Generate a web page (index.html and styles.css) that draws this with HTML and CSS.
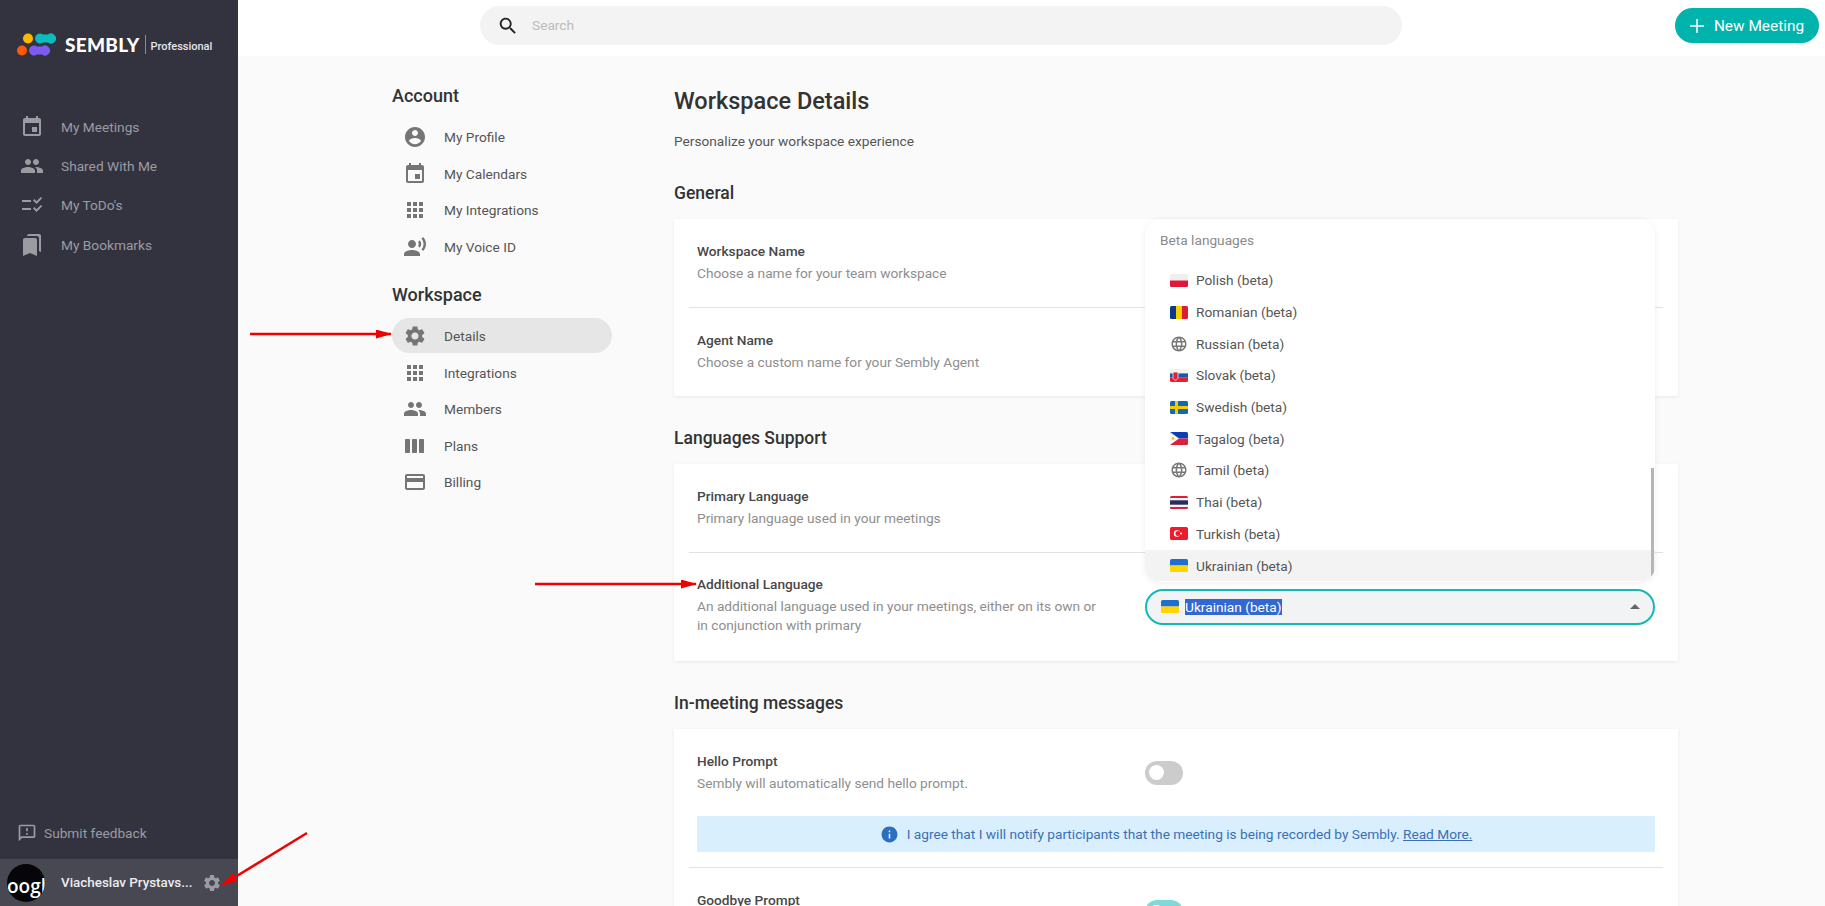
FILE: index.html
```html
<!DOCTYPE html>
<html lang="en">
<head>
    <meta charset="UTF-8">
    <meta name="viewport" content="width=device-width, initial-scale=1.0">
    <title>Sembly - Workspace Details</title>
    <link rel="stylesheet" href="styles.css">
</head>
<body>
    <svg class="icon-defs" width="0" height="0">
        <symbol id="i-event" viewBox="0 0 24 24"><path d="M17 12h-5v5h5v-5zM16 1v2H8V1H6v2H5c-1.11 0-1.99.9-1.99 2L3 19c0 1.1.89 2 2 2h14c1.1 0 2-.9 2-2V5c0-1.1-.9-2-2-2h-1V1h-2zm3 18H5V8h14v11z"/></symbol>
        <symbol id="i-people" viewBox="0 0 24 24"><path d="M16 11c1.66 0 2.99-1.34 2.99-3S17.66 5 16 5c-1.66 0-3 1.34-3 3s1.34 3 3 3zm-8 0c1.66 0 2.99-1.34 2.99-3S9.66 5 8 5C6.34 5 5 6.34 5 8s1.34 3 3 3zm0 2c-2.33 0-7 1.17-7 3.5V19h14v-2.5c0-2.33-4.67-3.5-7-3.5zm8 0c-.29 0-.62.02-.97.05 1.16.84 1.97 1.97 1.97 3.45V19h6v-2.5c0-2.33-4.67-3.5-7-3.5z"/></symbol>
        <symbol id="i-todo" viewBox="0 0 24 24"><path d="M16.54 11L13 7.46l1.41-1.41 2.12 2.12 4.24-4.24 1.41 1.41zM16.54 19L13 15.46l1.41-1.41 2.12 2.12 4.24-4.24 1.41 1.41zM11 7H2v2h9zM11 15H2v2h9z"/></symbol>
        <symbol id="i-bookmarks" viewBox="0 0 24 24"><path d="M19 18l2 1V3c0-1.1-.9-2-2-2H8.99C7.89 1 7 1.9 7 3h10c1.1 0 2 .9 2 2v13zM15 5H5c-1.1 0-2 .9-2 2v16l7-3 7 3V7c0-1.1-.9-2-2-2z"/></symbol>
        <symbol id="i-account" viewBox="0 0 24 24"><path d="M12 2C6.48 2 2 6.48 2 12s4.48 10 10 10 10-4.48 10-10S17.52 2 12 2zm0 3c1.66 0 3 1.34 3 3s-1.34 3-3 3-3-1.34-3-3 1.34-3 3-3zm0 14.2c-2.5 0-4.71-1.28-6-3.22.03-1.99 4-3.08 6-3.08 1.99 0 5.97 1.09 6 3.08-1.29 1.94-3.5 3.22-6 3.22z"/></symbol>
        <symbol id="i-apps" viewBox="0 0 24 24"><path d="M4 8h4V4H4v4zm6 12h4v-4h-4v4zm-6 0h4v-4H4v4zm0-6h4v-4H4v4zm6 0h4v-4h-4v4zm6-10v4h4V4h-4zm-6 4h4V4h-4v4zm6 6h4v-4h-4v4zm0 6h4v-4h-4v4z"/></symbol>
        <symbol id="i-voice" viewBox="0 0 24 24"><path d="M9 13c2.21 0 4-1.79 4-4s-1.79-4-4-4-4 1.79-4 4 1.79 4 4 4zm0 2c-2.67 0-8 1.34-8 4v2h16v-2c0-2.66-5.33-4-8-4zm7.76-9.64l-1.68 1.69c.84 1.18.84 2.71 0 3.89l1.68 1.69c2.02-2.02 2.02-5.07 0-7.27zM20.07 2l-1.63 1.63c2.77 3.02 2.77 7.56 0 10.74L20.07 16c3.9-3.89 3.91-9.95 0-14z"/></symbol>
        <symbol id="i-gear" viewBox="0 0 24 24"><path d="M19.14 12.94c.04-.3.06-.61.06-.94 0-.32-.02-.64-.07-.94l2.03-1.58c.18-.14.23-.41.12-.61l-1.92-3.32c-.12-.22-.37-.29-.59-.22l-2.39.96c-.5-.38-1.03-.7-1.62-.94l-.36-2.54c-.04-.24-.24-.41-.48-.41h-3.84c-.24 0-.43.17-.47.41l-.36 2.54c-.59.24-1.13.57-1.62.94l-2.39-.96c-.22-.08-.47 0-.59.22L2.74 8.87c-.12.21-.08.47.12.61l2.03 1.58c-.05.3-.09.63-.09.94s.02.64.07.94l-2.03 1.58c-.18.14-.23.41-.12.61l1.92 3.32c.12.22.37.29.59.22l2.39-.96c.5.38 1.03.7 1.62.94l.36 2.54c.05.24.24.41.48.41h3.84c.24 0 .44-.17.47-.41l.36-2.54c.59-.24 1.13-.56 1.62-.94l2.39.96c.22.08.47 0 .59-.22l1.92-3.32c.12-.22.07-.47-.12-.61l-2.01-1.58zM12 15.6c-1.98 0-3.6-1.62-3.6-3.6s1.62-3.6 3.6-3.6 3.6 1.62 3.6 3.6-1.62 3.6-3.6 3.6z"/></symbol>
        <symbol id="i-week" viewBox="0 0 24 24"><path d="M6 5H3c-.55 0-1 .45-1 1v12c0 .55.45 1 1 1h3c.55 0 1-.45 1-1V6c0-.55-.45-1-1-1zm14 0h-3c-.55 0-1 .45-1 1v12c0 .55.45 1 1 1h3c.55 0 1-.45 1-1V6c0-.55-.45-1-1-1zm-7 0h-3c-.55 0-1 .45-1 1v12c0 .55.45 1 1 1h3c.55 0 1-.45 1-1V6c0-.55-.45-1-1-1z"/></symbol>
        <symbol id="i-card" viewBox="0 0 24 24"><path d="M20 4H4c-1.11 0-1.99.89-1.99 2L2 18c0 1.11.89 2 2 2h16c1.11 0 2-.89 2-2V6c0-1.11-.89-2-2-2zm0 14H4v-6h16v6zm0-10H4V6h16v2z"/></symbol>
        <symbol id="i-feedback" viewBox="0 0 24 24"><path d="M20 2H4c-1.1 0-1.99.9-1.99 2L2 22l4-4h14c1.1 0 2-.9 2-2V4c0-1.1-.9-2-2-2zm0 14H5.17L4 17.17V4h16v12zM11 12h2v2h-2zM11 6h2v4h-2z"/></symbol>
        <symbol id="i-globe" viewBox="0 0 24 24"><path d="M11.99 2C6.47 2 2 6.48 2 12s4.47 10 9.99 10C17.52 22 22 17.52 22 12S17.52 2 11.99 2zm6.93 6h-2.95c-.32-1.25-.78-2.45-1.38-3.56 1.84.63 3.37 1.91 4.33 3.56zM12 4.04c.83 1.2 1.48 2.53 1.91 3.96h-3.82c.43-1.43 1.08-2.76 1.91-3.96zM4.26 14C4.1 13.36 4 12.69 4 12s.1-1.36.26-2h3.38c-.08.66-.14 1.32-.14 2 0 .68.06 1.34.14 2H4.26zm.82 2h2.95c.32 1.25.78 2.45 1.38 3.56-1.84-.63-3.37-1.9-4.33-3.56zm2.95-8H5.08c.96-1.66 2.49-2.93 4.33-3.56C8.81 5.55 8.35 6.75 8.03 8zM12 19.96c-.83-1.2-1.48-2.53-1.91-3.96h3.82c-.43 1.43-1.08 2.76-1.91 3.96zM14.34 14H9.66c-.09-.66-.16-1.32-.16-2 0-.68.07-1.35.16-2h4.68c.09.65.16 1.32.16 2 0 .68-.07 1.34-.16 2zm.25 5.56c.6-1.11 1.06-2.31 1.38-3.56h2.95c-.96 1.65-2.49 2.93-4.33 3.56zM16.36 14c.08-.66.14-1.32.14-2 0-.68-.06-1.34-.14-2h3.38c.16.64.26 1.31.26 2s-.1 1.36-.26 2h-3.38z"/></symbol>
        <symbol id="f-ua" viewBox="0 0 18 13"><rect width="18" height="6.5" fill="#1f6fd0"/><rect y="6.5" width="18" height="6.5" fill="#ffd500"/></symbol>
    </svg>

    <aside class="sidebar">
        <div class="logo">
            <svg class="logo-mark" width="40" height="24" viewBox="0 0 40 24">
                <circle cx="11" cy="5.5" r="5" fill="#fdb900"/>
                <circle cx="5" cy="17.5" r="5" fill="#ff5a0a"/>
                <path d="M18 5.5a5 5 0 0 1 8-4h5a5 5 0 1 1 0 8h-5a5 5 0 0 1-8-4z" fill="#0cbcbc"/>
                <path d="M12 17.5a5 5 0 0 1 8-4h5a5 5 0 1 1 0 8h-5a5 5 0 0 1-8-4z" fill="#7a5cf0"/>
            </svg>
            <span class="logo-name">SEMBLY</span>
            <span class="logo-plan">Professional</span>
        </div>
        <nav class="side-nav">
            <a class="side-link"><svg class="icon"><use href="#i-event"/></svg>My Meetings</a>
            <a class="side-link"><svg class="icon"><use href="#i-people"/></svg>Shared With Me</a>
            <a class="side-link"><svg class="icon"><use href="#i-todo"/></svg>My ToDo's</a>
            <a class="side-link"><svg class="icon"><use href="#i-bookmarks"/></svg>My Bookmarks</a>
        </nav>
        <a class="feedback"><svg class="icon-small"><use href="#i-feedback"/></svg>Submit feedback</a>
        <div class="user">
            <div class="avatar">oogl</div>
            <span class="user-name">Viacheslav Prystavs...</span>
            <svg class="icon-small"><use href="#i-gear"/></svg>
        </div>
    </aside>

    <div class="page">
        <header class="topbar">
            <div class="search">
                <svg class="search-icon" viewBox="0 0 24 24"><path d="M15.5 14h-.79l-.28-.27C15.41 12.59 16 11.11 16 9.5 16 5.91 13.09 3 9.5 3S3 5.91 3 9.5 5.91 16 9.5 16c1.61 0 3.09-.59 4.23-1.57l.27.28v.79l5 4.99L20.49 19l-4.99-5zm-6 0C7.01 14 5 11.99 5 9.5S7.01 5 9.5 5 14 7.01 14 9.5 11.99 14 9.5 14z"/></svg>
                <span class="search-text">Search</span>
            </div>
            <button class="new-meeting">
                <svg width="14" height="14" viewBox="0 0 14 14"><path d="M7 0v14M0 7h14" stroke="#fff" stroke-width="1.5"/></svg>
                New Meeting
            </button>
        </header>

        <div class="content">
            <nav class="settings-nav">
                <h3>Account</h3>
                <ul>
                    <li><svg class="icon"><use href="#i-account"/></svg>My Profile</li>
                    <li><svg class="icon"><use href="#i-event"/></svg>My Calendars</li>
                    <li><svg class="icon"><use href="#i-apps"/></svg>My Integrations</li>
                    <li><svg class="icon"><use href="#i-voice"/></svg>My Voice ID</li>
                </ul>
                <h3 class="second">Workspace</h3>
                <ul>
                    <li class="active"><svg class="icon"><use href="#i-gear"/></svg>Details</li>
                    <li><svg class="icon"><use href="#i-apps"/></svg>Integrations</li>
                    <li><svg class="icon"><use href="#i-people"/></svg>Members</li>
                    <li><svg class="icon"><use href="#i-week"/></svg>Plans</li>
                    <li><svg class="icon"><use href="#i-card"/></svg>Billing</li>
                </ul>
            </nav>

            <main class="details">
                <h1>Workspace Details</h1>
                <p class="lead">Personalize your workspace experience</p>

                <h2>General</h2>
                <section class="card">
                    <div class="row">
                        <div class="row-text">
                            <div class="row-title">Workspace Name</div>
                            <div class="row-sub">Choose a name for your team workspace</div>
                        </div>
                    </div>
                    <div class="row">
                        <div class="row-text">
                            <div class="row-title">Agent Name</div>
                            <div class="row-sub">Choose a custom name for your Sembly Agent</div>
                        </div>
                    </div>
                </section>

                <h2>Languages Support</h2>
                <section class="card card-languages">
                    <div class="row">
                        <div class="row-text">
                            <div class="row-title">Primary Language</div>
                            <div class="row-sub">Primary language used in your meetings</div>
                        </div>
                    </div>
                    <div class="row row-select">
                        <div class="row-text">
                            <div class="row-title">Additional Language</div>
                            <div class="row-sub">An additional language used in your meetings, either on its own or in conjunction with primary</div>
                        </div>
                        <div class="select">
                            <svg class="flag"><use href="#f-ua"/></svg>
                            <span class="selected-text">Ukrainian (beta)</span>
                            <span class="caret"></span>

                            <div class="menu">
                                <div class="menu-label">Beta languages</div>
                                <div class="menu-item">
                                    <svg class="flag" viewBox="0 0 18 13"><rect width="18" height="6.5" fill="#efefef"/><rect y="6.5" width="18" height="6.5" fill="#e0173d"/></svg>Polish (beta)
                                </div>
                                <div class="menu-item">
                                    <svg class="flag" viewBox="0 0 18 13"><rect width="6" height="13" fill="#0a3a8c"/><rect x="6" width="6" height="13" fill="#fdd000"/><rect x="12" width="6" height="13" fill="#d81e34"/></svg>Romanian (beta)
                                </div>
                                <div class="menu-item"><svg class="flag globe"><use href="#i-globe"/></svg>Russian (beta)</div>
                                <div class="menu-item">
                                    <svg class="flag" viewBox="0 0 18 13"><rect width="18" height="4.4" fill="#f2f2f2"/><rect y="4.4" width="18" height="4.3" fill="#1557b0"/><rect y="8.7" width="18" height="4.3" fill="#e6202f"/><path d="M3 3h5v5.5c0 1.5-1.3 2.3-2.5 2.800C4.300 10.800 3 10 3 8.500z" fill="#e6202f" stroke="#fff" stroke-width=".7"/></svg>Slovak (beta)
                                </div>
                                <div class="menu-item">
                                    <svg class="flag" viewBox="0 0 18 13"><rect width="18" height="13" fill="#0b6cb0"/><rect x="5" width="3" height="13" fill="#fdc800"/><rect y="5" width="18" height="3" fill="#fdc800"/></svg>Swedish (beta)
                                </div>
                                <div class="menu-item">
                                    <svg class="flag" viewBox="0 0 18 13"><rect width="18" height="6.5" fill="#0c3fb5"/><rect y="6.5" width="18" height="6.5" fill="#dc1f3c"/><path d="M0 0l9 6.5L0 13z" fill="#f5f5f5"/><circle cx="3" cy="6.5" r="1.4" fill="#fcc41a"/></svg>Tagalog (beta)
                                </div>
                                <div class="menu-item"><svg class="flag globe"><use href="#i-globe"/></svg>Tamil (beta)</div>
                                <div class="menu-item">
                                    <svg class="flag" viewBox="0 0 18 13"><rect width="18" height="13" fill="#d8203a"/><rect y="2" width="18" height="9" fill="#f3f3f3"/><rect y="4.3" width="18" height="4.4" fill="#2a2d60"/></svg>Thai (beta)
                                </div>
                                <div class="menu-item">
                                    <svg class="flag" viewBox="0 0 18 13"><rect width="18" height="13" rx="1" fill="#ec1c2c"/><circle cx="7" cy="6.5" r="3.2" fill="#fff"/><circle cx="8" cy="6.5" r="2.5" fill="#ec1c2c"/><circle cx="11" cy="6.5" r="1" fill="#fff"/></svg>Turkish (beta)
                                </div>
                                <div class="menu-item hover"><svg class="flag"><use href="#f-ua"/></svg>Ukrainian (beta)</div>
                                <div class="scrollbar"></div>
                            </div>
                        </div>
                    </div>
                </section>

                <h2>In-meeting messages</h2>
                <section class="card">
                    <div class="row row-block">
                        <div class="row-main">
                            <div class="row-text">
                                <div class="row-title">Hello Prompt</div>
                                <div class="row-sub">Sembly will automatically send hello prompt.</div>
                            </div>
                            <span class="toggle"></span>
                        </div>
                        <div class="notice">
                            <svg class="notice-icon" viewBox="0 0 24 24"><path d="M12 2C6.48 2 2 6.48 2 12s4.48 10 10 10 10-4.48 10-10S17.52 2 12 2zm1 15h-2v-6h2v6zm0-8h-2V7h2v2z"/></svg>
                            <span>I agree that I will notify participants that the meeting is being recorded by Sembly. <a>Read More.</a></span>
                        </div>
                    </div>
                    <div class="row row-block">
                        <div class="row-main">
                            <div class="row-text">
                                <div class="row-title">Goodbye Prompt</div>
                            </div>
                            <span class="toggle toggle-on"></span>
                        </div>
                    </div>
                </section>
            </main>
        </div>
    </div>

    <!-- red annotation arrows on top of the screenshot -->
    <svg class="arrows" width="1825" height="906" viewBox="0 0 1825 906">
        <defs>
            <marker id="head" markerWidth="16" markerHeight="9" refX="15" refY="4.5" orient="auto" markerUnits="userSpaceOnUse">
                <path d="M0 0L16 4.5L0 9z" fill="#f00000"/>
            </marker>
        </defs>
        <path d="M250 334H391" stroke="#f00000" stroke-width="2.5" marker-end="url(#head)"/>
        <path d="M535 584H696" stroke="#f00000" stroke-width="2.5" marker-end="url(#head)"/>
        <path d="M307 833L222 885" stroke="#f00000" stroke-width="2.5" marker-end="url(#head)"/>
    </svg>
</body>
</html>
```

FILE: styles.css
```css
* {
    margin: 0;
    padding: 0;
    box-sizing: border-box;
}

html, body {
    height: 100%;
    overflow: hidden;
}

body {
    display: flex;
    font-family: Roboto, sans-serif;
    font-size: 13.7px;
    background-color: #fafafa;
    color: #333;
}

.icon-defs {
    position: absolute;
}

.icon {
    width: 24px;
    height: 24px;
    flex: none;
    fill: currentColor;
}

.icon-small {
    width: 20px;
    height: 20px;
    flex: none;
    fill: currentColor;
}

/* sidebar */
.sidebar {
    width: 238px;
    flex: none;
    display: flex;
    flex-direction: column;
    background-color: #33333f;
    color: #9b9ba3;
}

.logo {
    height: 107px;
    padding: 33px 0 0 17px;
    display: flex;
    align-items: flex-start;
}

.logo-mark {
    flex: none;
}

.logo-name {
    margin: 2px 0 0 8px;
    padding-right: 6px;
    border-right: 1px solid #8a8a93;
    font-family: Lato, sans-serif;
    font-size: 19px;
    font-weight: 900;
    line-height: 19px;
    letter-spacing: 0.3px;
    color: #fff;
}

.logo-plan {
    margin: 4px 0 0 4px;
    font-size: 11px;
    font-weight: 500;
    line-height: 19px;
    color: #e6e6ea;
}

.side-link {
    height: 39.3px;
    padding-left: 20px;
    display: flex;
    align-items: center;
    gap: 17px;
}

.feedback {
    margin-top: auto;
    height: 40px;
    margin-bottom: 6px;
    padding-left: 17px;
    display: flex;
    align-items: center;
    gap: 7px;
}

.user {
    height: 47px;
    padding: 0 16px 0 7px;
    display: flex;
    align-items: center;
    background-color: #484852;
}

.avatar {
    width: 38px;
    height: 38px;
    flex: none;
    margin-right: 16px;
    border-radius: 50%;
    overflow: hidden;
    background-color: #060608;
    color: #fff;
    font-family: "Open Sans", sans-serif;
    font-size: 19px;
    font-weight: 600;
    line-height: 44px;
    white-space: nowrap;
}

.user-name {
    flex: 1;
    color: #ececf0;
    font-size: 13.4px;
    font-weight: 500;
    white-space: nowrap;
}

/* top bar */
.page {
    flex: 1;
    min-width: 0;
    display: flex;
    flex-direction: column;
}

.topbar {
    height: 56px;
    flex: none;
    padding: 6px 6px 0 242px;
    display: flex;
    align-items: flex-start;
    justify-content: space-between;
    background-color: #fff;
}

.search {
    width: 922px;
    height: 39px;
    padding-left: 17px;
    display: flex;
    align-items: center;
    gap: 13px;
    border-radius: 20px;
    background-color: #f3f3f3;
    color: #bbb;
}

.search-text {
    padding-bottom: 1px;
}

.search-icon {
    width: 22px;
    height: 22px;
    fill: #222;
}

.new-meeting {
    width: 144px;
    height: 35px;
    margin-top: 2px;
    border: none;
    border-radius: 18px;
    display: flex;
    align-items: center;
    justify-content: center;
    gap: 10px;
    background-color: #00b3ad;
    color: #fff;
    font-family: Roboto, sans-serif;
    font-size: 15.4px;
}

/* settings nav */
.content {
    flex: 1;
    min-height: 0;
    padding-left: 154px;
    display: flex;
    gap: 62px;
}

.settings-nav {
    width: 220px;
    flex: none;
    padding-top: 28px;
}

.settings-nav h3 {
    margin-bottom: 11px;
    font-size: 18px;
    font-weight: 500;
    line-height: 24px;
    color: #333;
}

.settings-nav h3.second {
    margin-top: 18px;
}

.settings-nav ul {
    list-style: none;
}

.settings-nav li {
    height: 36.5px;
    padding-left: 11px;
    display: flex;
    align-items: center;
    gap: 17px;
    border-radius: 18px;
    color: #555;
}

.settings-nav li .icon {
    color: #757575;
}

.settings-nav li.active {
    height: 35px;
    margin-bottom: 1.5px;
    background-color: #e6e6e6;
}

/* main column */
.details {
    width: 1004px;
    flex: none;
    padding-top: 29px;
}

.details h1 {
    font-size: 23.5px;
    font-weight: 500;
    line-height: 32px;
    color: #333;
}

.lead {
    margin-top: 14px;
    line-height: 20px;
    color: #555;
}

.details h2 {
    margin: 30px 0 14px;
    font-size: 17.5px;
    font-weight: 500;
    line-height: 24px;
    color: #333;
}

.card {
    padding: 0 15px;
    background-color: #fff;
    box-shadow: 0 1px 3px rgba(0, 0, 0, 0.08);
}

.row {
    min-height: 88px;
    padding: 22px 8px 23px;
    border-bottom: 1px solid #e2e2e2;
    display: flex;
}

.row:last-child {
    border-bottom: none;
}

.card-languages .row {
    min-height: 89px;
}

.card-languages .row-select {
    min-height: 108px;
    padding-top: 21px;
    padding-bottom: 21px;
}

.row-block {
    display: block;
    padding-bottom: 15px;
}

.row-main {
    display: flex;
}

.row-text {
    width: 448px;
    flex: none;
    padding-right: 40px;
}

.row-title {
    font-weight: 500;
    line-height: 20px;
    color: #484848;
}

.row-sub {
    margin-top: 3px;
    line-height: 19.5px;
    color: #8e8e8e;
}

.toggle {
    width: 38px;
    height: 24px;
    margin-top: 10px;
    position: relative;
    border-radius: 12px;
    background-color: #ccc;
}

.toggle::after {
    content: "";
    width: 15px;
    height: 15px;
    position: absolute;
    left: 4px;
    top: 4.5px;
    border-radius: 50%;
    background-color: #fff;
}

.toggle-on {
    background-color: #7fd9d6;
}

.notice {
    height: 36px;
    margin-top: 23px;
    display: flex;
    align-items: center;
    justify-content: center;
    gap: 8px;
    background-color: #d9effd;
    color: #3a6fb8;
}

.notice a {
    text-decoration: underline;
}

.notice-icon {
    width: 19px;
    height: 19px;
    fill: #2a6fc0;
}

/* language select and its open menu */
.select {
    flex: 1;
    height: 36px;
    margin-top: 15px;
    padding-left: 14px;
    position: relative;
    display: flex;
    align-items: center;
    gap: 6px;
    border: 2px solid #14b8b5;
    border-radius: 18px;
    background-color: #f2f3f5;
    color: #555;
}

.flag {
    width: 18px;
    height: 13px;
    flex: none;
    border-radius: 1.5px;
}

.flag.globe {
    height: 18px;
    fill: #777;
}

.selected-text {
    background-color: #3367d1;
    color: #fff;
    line-height: 16px;
}

.caret {
    width: 0;
    height: 0;
    position: absolute;
    right: 13px;
    top: 13px;
    border-left: 5px solid transparent;
    border-right: 5px solid transparent;
    border-bottom: 5px solid #666;
}

.menu {
    height: 363px;
    position: absolute;
    left: -2px;
    right: -2px;
    bottom: calc(100% + 9px);
    overflow: hidden;
    border-radius: 16px;
    background-color: #fff;
    box-shadow: 0 1px 6px rgba(0, 0, 0, 0.07);
}

.menu-label {
    height: 46px;
    padding: 12px 0 0 15px;
    line-height: 18px;
    color: #8a8a8a;
}

.menu-item {
    height: 31.7px;
    padding-left: 25px;
    display: flex;
    align-items: center;
    gap: 8px;
    color: #555;
}

.menu-item.hover {
    background-color: #f3f3f4;
}

.scrollbar {
    width: 3px;
    height: 112px;
    position: absolute;
    right: 1px;
    bottom: 2px;
    background-color: #b5b5b5;
}

.arrows {
    position: absolute;
    left: 0;
    top: 0;
    pointer-events: none;
}
```
